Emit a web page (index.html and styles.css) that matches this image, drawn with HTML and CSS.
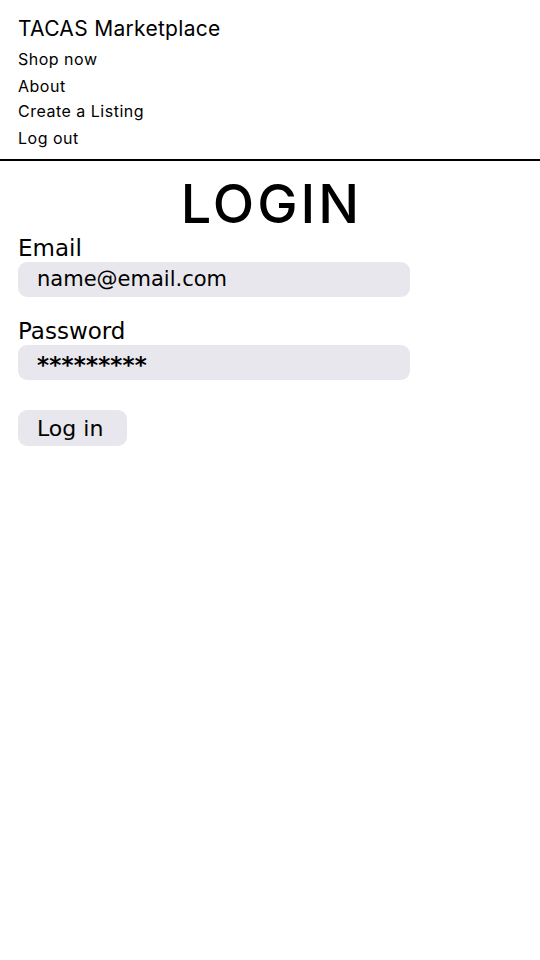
FILE: index.html
```html
<!DOCTYPE html>
<html>
<head>
<meta charset="utf-8">
<link rel="stylesheet" href="styles.css">
</head>
<body>
<header class="nav">
  <div class="brand">TACAS Marketplace</div>
  <a class="link l1" href="#">Shop now</a>
  <a class="link l2" href="#">About</a>
  <a class="link l3" href="#">Create a Listing</a>
  <a class="link l4" href="#">Log out</a>
</header>
<main class="login">
  <h1 class="title">LOGIN</h1>
  <form class="form">
    <label class="label">Email</label>
    <div class="input">name@email.com</div>
    <label class="label pw">Password</label>
    <div class="input stars">*********</div>
    <button class="btn" type="button">Log in</button>
  </form>
</main>
</body>
</html>
```
FILE: styles.css
```css
html, body { margin: 0; padding: 0; background: #fff; }
body { font-family: "DejaVu Sans", sans-serif; color: #000; }
.nav {
  display: flex;
  flex-direction: column;
  padding: 16px 18px 8px;
  border-bottom: 2px solid #000;
}
.brand { font-family: "Inter", sans-serif; font-size: 21px; line-height: 26px; letter-spacing: 0.3px; }
.link { font-family: "Inter", sans-serif; color: #000; text-decoration: none; font-size: 16px; line-height: 26px; letter-spacing: 0.5px; }
.l1 { margin-top: 4px; }
.l2 { margin-top: 1px; }
.l3 { margin-top: -1px; }
.l4 { margin-top: 1px; }
.title {
  margin: 13px 0 0;
  text-align: center;
  font-family: "Inter", sans-serif;
  font-weight: 500;
  font-size: 54px;
  line-height: 60px;
  letter-spacing: 3px;
  padding-left: 3px;
}
.form { display: flex; flex-direction: column; align-items: flex-start; padding: 0 18px; }
.label { font-family: "DejaVu Sans", sans-serif; font-size: 23px; line-height: 28px; }
.pw { margin-top: 20px; }
.input {
  width: 392px;
  height: 35px;
  box-sizing: border-box;
  background: #e8e7ed;
  border-radius: 9px;
  padding: 0 19px;
  font-family: "DejaVu Sans", sans-serif;
  font-size: 21px;
  line-height: 35px;
}
.stars { font-weight: bold; font-size: 23px; letter-spacing: 0.2px; padding-top: 5px; line-height: 30px; }
.btn {
  margin-top: 30px;
  border: none;
  background: #e8e7ed;
  border-radius: 9px;
  width: 109px;
  height: 36px;
  padding: 0 0 0 19px;
  text-align: left;
  font-family: "DejaVu Sans", sans-serif;
  font-size: 22px;
  color: #000;
}
```
